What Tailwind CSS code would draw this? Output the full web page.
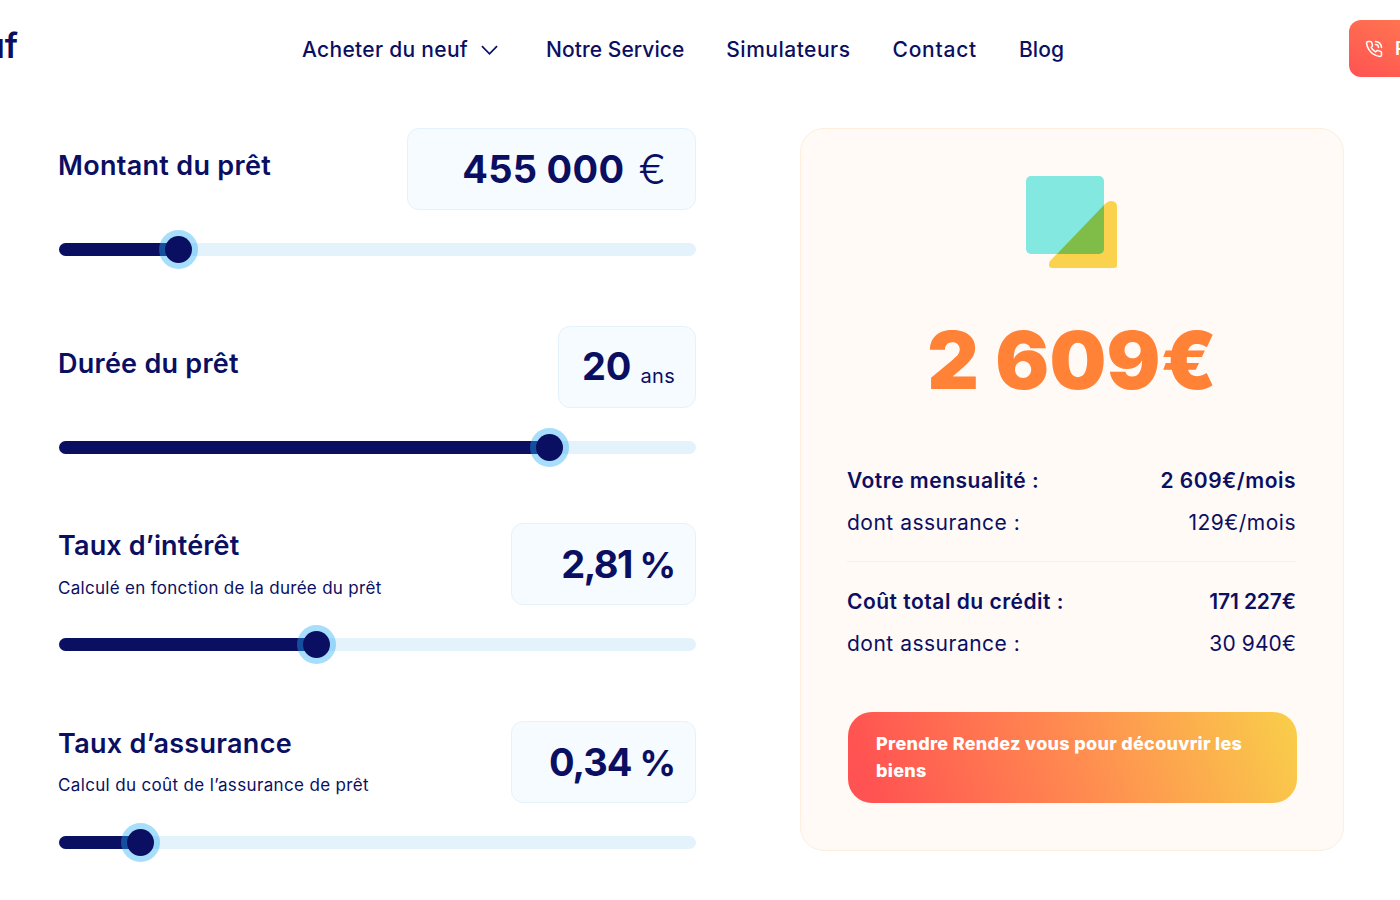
<!DOCTYPE html>
<html lang="fr">
<head>
    <meta charset="UTF-8">
    <meta name="viewport" content="width=device-width, initial-scale=1.0">
    <title>Simulateur de prêt</title>
    <script src="https://cdn.jsdelivr.net/npm/@tailwindcss/browser@4"></script>
</head>
<body class="bg-white h-[900px] overflow-hidden text-[#0b0f62] font-['Inter',sans-serif]">

    <!-- Header -->
    <header class="h-[128px] relative">
        <nav class="flex items-center gap-[42px] pl-[302px] pt-[36px] h-[99px] pb-[36px] text-[21px] font-medium">
            <a class="flex items-center gap-[13px] mr-[6px] tracking-[0.3px]">Acheter du neuf
                <svg width="17" height="10" viewBox="0 0 18 10" fill="none" stroke="#0b0f62" stroke-width="1.8"><path d="M1 1l8 8 8-8"/></svg>
            </a>
            <a class="tracking-[0.05px]">Notre Service</a>
            <a class="tracking-[0.5px]">Simulateurs</a>
            <a class="tracking-[0.75px]">Contact</a>
            <a class="tracking-[0.15px]">Blog</a>
        </nav>
        <!-- logo and call button are cut off by the window edges -->
        <div class="absolute right-[1382px] top-[25px] text-[34px] leading-[42px] font-semibold whitespace-nowrap">neuf</div>
        <a class="absolute left-[1349px] top-[20px] w-[120px] h-[57px] rounded-[12px] bg-gradient-to-tr from-[#ff5252] to-[#ff7f50] text-white flex items-center gap-[12px] pl-[16px] text-[18px] font-semibold">
            <svg width="18" height="18" viewBox="0 0 24 24" fill="none" stroke="white" stroke-width="2" stroke-linecap="round" stroke-linejoin="round"><path d="M22 16.9v3a2 2 0 0 1-2.2 2 19.8 19.8 0 0 1-8.6-3.1 19.5 19.5 0 0 1-6-6A19.8 19.8 0 0 1 2.1 4.2 2 2 0 0 1 4.1 2h3a2 2 0 0 1 2 1.7c.1 1 .4 1.9.7 2.8a2 2 0 0 1-.5 2.1L8.1 9.9a16 16 0 0 0 6 6l1.3-1.3a2 2 0 0 1 2.1-.4c.9.3 1.8.5 2.8.7a2 2 0 0 1 1.7 2z"/><path d="M14 2a8 8 0 0 1 8 8M14 6a4 4 0 0 1 4 4"/></svg>
            Rendez
        </a>
    </header>

    <main class="flex items-start pl-[58px] pr-[56px] justify-between">
        <!-- Sliders -->
        <section class="w-[638px]">
            <div class="flex justify-between items-start h-[82px]">
                <h2 class="text-[27px] leading-[38px] font-semibold tracking-[0.3px] mt-[19px]">Montant du prêt</h2>
                <div class="w-[289px] h-[82px] rounded-[12px] border border-[#e4f2fc] bg-[#f6fbff] flex items-center justify-end gap-[14px] pr-[29px]">
                    <span class="text-[38px] font-bold tracking-[0.3px] mt-[1px]">455 000</span>
                    <span class="text-[41px] font-light mt-[1px]">€</span>
                </div>
            </div>
            <div class="relative mt-[33px] ml-px h-[13px] rounded-full bg-[#e4f2fc]">
                <div class="h-full w-[120px] rounded-full bg-[#0b0f62]"></div>
                <div class="absolute left-[106px] top-[-7px] w-[27px] h-[27px] rounded-full bg-[#0b0f62] ring-[6px] ring-[#24acf5]/40"></div>
            </div>

            <div class="flex justify-between items-start h-[82px] mt-[70px]">
                <h2 class="text-[27px] leading-[38px] font-semibold tracking-[0.25px] mt-[19px]">Durée du prêt</h2>
                <div class="w-[138px] h-[82px] rounded-[12px] border border-[#e4f2fc] bg-[#f6fbff] flex items-center justify-end gap-[9px] pr-[20px]">
                    <span class="text-[38px] font-bold mt-[-2px]">20</span>
                    <span class="text-[20px] mt-[17px] tracking-[0.3px]">ans</span>
                </div>
            </div>
            <div class="relative mt-[33px] ml-px h-[13px] rounded-full bg-[#e4f2fc]">
                <div class="h-full w-[491px] rounded-full bg-[#0b0f62]"></div>
                <div class="absolute left-[477px] top-[-7px] w-[27px] h-[27px] rounded-full bg-[#0b0f62] ring-[6px] ring-[#24acf5]/40"></div>
            </div>

            <div class="flex justify-between items-start h-[82px] mt-[69px]">
                <div>
                    <h2 class="text-[27px] leading-[38px] font-semibold tracking-[0.15px] mt-[4px]">Taux d’intérêt</h2>
                    <p class="text-[17px] leading-[26px] mt-[10px] tracking-[0.3px]">Calculé en fonction de la durée du prêt</p>
                </div>
                <div class="w-[185px] h-[82px] rounded-[12px] border border-[#e4f2fc] bg-[#f6fbff] flex items-center justify-end pr-[20px]">
                    <span class="text-[38px] font-bold mt-[1px] tracking-[-1.5px]">2,81 <span class="text-[36px] tracking-[-1px]">%</span></span>
                </div>
            </div>
            <div class="relative mt-[33px] ml-px h-[13px] rounded-full bg-[#e4f2fc]">
                <div class="h-full w-[258px] rounded-full bg-[#0b0f62]"></div>
                <div class="absolute left-[244px] top-[-7px] w-[27px] h-[27px] rounded-full bg-[#0b0f62] ring-[6px] ring-[#24acf5]/40"></div>
            </div>

            <div class="flex justify-between items-start h-[82px] mt-[70px]">
                <div>
                    <h2 class="text-[27px] leading-[38px] font-semibold tracking-[0.3px] mt-[4px]">Taux d’assurance</h2>
                    <p class="text-[17px] leading-[26px] mt-[9px] tracking-[0.35px]">Calcul du coût de l’assurance de prêt</p>
                </div>
                <div class="w-[185px] h-[82px] rounded-[12px] border border-[#e4f2fc] bg-[#f6fbff] flex items-center justify-end pr-[20px]">
                    <span class="text-[38px] font-bold mt-[1px] tracking-[-1px]">0,34 <span class="text-[36px]">%</span></span>
                </div>
            </div>
            <div class="relative mt-[33px] ml-px h-[13px] rounded-full bg-[#e4f2fc]">
                <div class="h-full w-[82px] rounded-full bg-[#0b0f62]"></div>
                <div class="absolute left-[68px] top-[-7px] w-[27px] h-[27px] rounded-full bg-[#0b0f62] ring-[6px] ring-[#24acf5]/40"></div>
            </div>
        </section>

        <!-- Result card -->
        <aside class="w-[544px] h-[723px] rounded-[24px] border border-[#fdeedd] bg-[#fffaf6] px-[47px] pt-[47px]">
            <svg class="block ml-[178px]" width="92" height="92" viewBox="0 0 92 92">
                <path d="M24 85 L79 28 Q82 25 85 25 Q91 25 91 31 V89 Q91 92 88 92 H26 Q23 92 23 89 Q23 86.5 24 85Z" fill="#fad24e"/>
                <rect x="0" y="0" width="78" height="78" rx="5" fill="#83e8e0"/>
                <path d="M31 78 L78 29 V73 a5 5 0 0 1 -5 5 Z" fill="#80bc48"/>
            </svg>
            <div class="text-[80px] leading-[100px] font-black text-[#ff8237] text-center mt-[42px] tracking-[0.2px]">2 609€</div>

            <div class="mt-[50px] -ml-px text-[21px] tracking-[0.5px]">
                <div class="flex justify-between h-[42px] items-center font-semibold"><span>Votre mensualité :</span><span>2 609€/mois</span></div>
                <div class="flex justify-between h-[42px] items-center"><span>dont assurance :</span><span>129€/mois</span></div>
                <div class="h-px bg-[#fdeedd] mt-[17px] mb-[19px]"></div>
                <div class="flex justify-between h-[42px] items-center font-semibold"><span>Coût total du crédit :</span><span class="tracking-[-0.1px]">171 227€</span></div>
                <div class="flex justify-between h-[42px] items-center"><span>dont assurance :</span><span class="tracking-[0.1px]">30 940€</span></div>
            </div>

            <a class="block mt-[47px] h-[91px] w-[449px] rounded-[24px] bg-[linear-gradient(70deg,#ff5252_5%,#ff8a50_50%,#f9cf4a_100%)] px-[28px] py-[18px] text-white text-[18px] leading-[27px] font-extrabold tracking-[0.3px]">Prendre Rendez vous pour découvrir les biens</a>
        </aside>
    </main>

</body>
</html>
